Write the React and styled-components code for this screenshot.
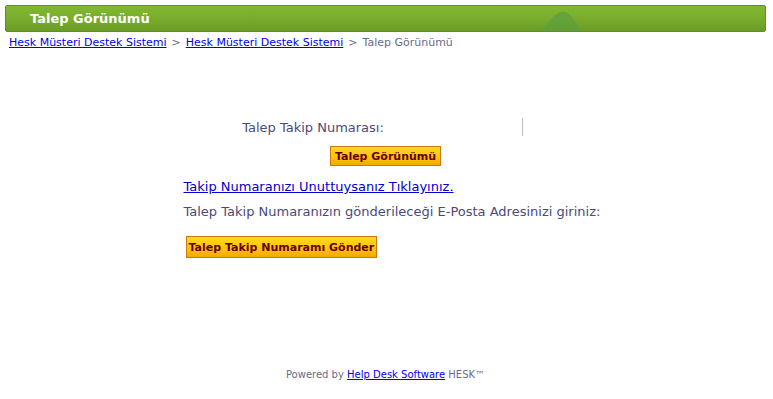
import React from "react";
import styled, { createGlobalStyle } from "styled-components";

const Global = createGlobalStyle`
  html, body {
    margin: 0;
    padding: 0;
    background: #fff;
  }
  body {
    font-family: "DejaVu Sans", Verdana, sans-serif;
    color: #4a4a7a;
  }
`;

export default function App() {
  return (
    <Page>
      <Global />
      <HeaderBar>
        <HeaderTitle>Talep Görünümü</HeaderTitle>
        <Hill viewBox="0 0 60 26" width="54" height="22">
          <path d="M6 26 C14 18 22 4 32 3 C40 3 46 14 54 26 Z" fill="#5c9e3e" opacity="0.7" />
        </Hill>
      </HeaderBar>
      <Crumbs>
        <a href="#">Hesk Müsteri Destek Sistemi</a>
        <Sep>&gt;</Sep>
        <a href="#">Hesk Müsteri Destek Sistemi</a>
        <Sep>&gt;</Sep>
        <span>Talep Görünümü</span>
      </Crumbs>

      <Main>
        <FormBox>
          <FieldRow>
            <Label>Talep Takip Numarası:</Label>
            <TrackInput />
          </FieldRow>
          <Center>
            <GoldButton>Talep Görünümü</GoldButton>
          </Center>
          <ForgotLink href="#">Takip Numaranızı Unuttuysanız Tıklayınız.</ForgotLink>
          <Hint>Talep Takip Numaranızın gönderileceği E-Posta Adresinizi giriniz:</Hint>
          <SendRow>
            <GoldButton $wide>Talep Takip Numaramı Gönder</GoldButton>
          </SendRow>
        </FormBox>
      </Main>

      <Footer>
        Powered by <a href="#">Help Desk Software</a> HESK™
      </Footer>
    </Page>
  );
}

const Page = styled.div`
  width: 773px;
  height: 399px;
  padding: 5px 7px 0 5px;
  box-sizing: border-box;
  display: flex;
  flex-direction: column;
`;

const HeaderBar = styled.div`
  position: relative;
  height: 25px;
  display: flex;
  align-items: center;
  padding-left: 24px;
  border: 1px solid #5f8f25;
  border-radius: 2px;
  background: linear-gradient(#82b832, #78ab2c 55%, #6a9c25);
  overflow: hidden;
`;

const HeaderTitle = styled.h1`
  margin: 0;
  font-family: "DejaVu Sans", Verdana, sans-serif;
  font-size: 13px;
  font-weight: bold;
  color: #fff;
`;

const Hill = styled.svg`
  position: absolute;
  left: 528px;
  bottom: 0;
`;

const Crumbs = styled.div`
  margin: 4px 0 0 4px;
  font-size: 11px;
  line-height: 14px;
  color: #6a6a8a;

  a {
    color: #0000ee;
  }
`;

const Sep = styled.span`
  margin: 0 5px;
`;

const Main = styled.div`
  display: flex;
  justify-content: center;
  padding-top: 68px;
`;

const FormBox = styled.div`
  width: 412px;
  display: flex;
  flex-direction: column;
  padding-left: 4px;
  box-sizing: border-box;
`;

const FieldRow = styled.div`
  display: flex;
  align-items: center;
  justify-content: center;
  gap: 6px;
  padding-right: 10px;
`;

const Label = styled.span`
  font-size: 13px;
`;

const TrackInput = styled.input`
  width: 132px;
  height: 18px;
  border: none;
  border-right: 1px solid #b8bccc;
  outline: none;
  padding: 0;
`;

const Center = styled.div`
  display: flex;
  justify-content: center;
  margin-top: 10px;
  padding-right: 4px;
`;

const GoldButton = styled.button`
  height: ${(p) => (p.$wide ? "22px" : "20px")};
  padding: 0 ${(p) => (p.$wide ? "2px" : "4px")};
  border: 1px solid #c87a10;
  background: linear-gradient(#ffd820, #fcc20a 60%, #f4a800);
  font-family: "DejaVu Sans", Verdana, sans-serif;
  font-size: 11px;
  font-weight: bold;
  color: #660000;
  cursor: pointer;
`;

const ForgotLink = styled.a`
  margin-top: 13px;
  font-size: 13px;
  color: #0000cc;
  white-space: nowrap;
`;

const Hint = styled.div`
  margin-top: 10px;
  font-size: 13px;
  white-space: nowrap;
`;

const SendRow = styled.div`
  display: flex;
  margin: 17px 0 0 2px;
`;

const Footer = styled.div`
  margin-top: auto;
  margin-bottom: 19px;
  text-align: center;
  font-size: 10px;
  color: #6a6a8a;

  a {
    color: #0000ee;
  }
`;
